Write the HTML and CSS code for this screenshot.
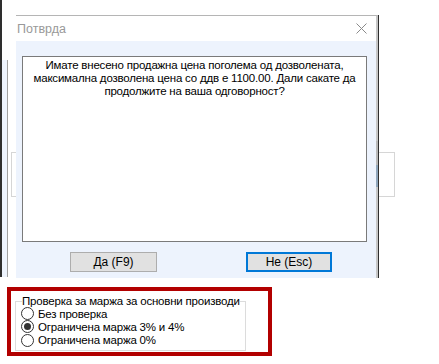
FILE: index.html
```html
<!DOCTYPE html>
<html lang="mk">
<head>
    <meta charset="UTF-8">
    <title>Потврда</title>
    <link rel="stylesheet" href="styles.css">
</head>
<body>
    <div class="backdrop">
        <div class="edge"></div>
        <div class="strip"></div>
        <div class="main">
            <div class="field"></div>
        </div>
    </div>

    <div class="margin-panel">
        <fieldset class="group">
            <legend>Проверка за маржа за основни производи</legend>
            <label class="radio"><input type="radio" name="marza"> Без проверка</label>
            <label class="radio"><input type="radio" name="marza" checked> Ограничена маржа 3% и 4%</label>
            <label class="radio"><input type="radio" name="marza"> Ограничена маржа 0%</label>
        </fieldset>
    </div>

    <!-- модален прозорец над формата -->
    <div class="dialog">
        <div class="titlebar">
            <span class="title">Потврда</span>
            <svg class="close" width="11" height="11" viewBox="0 0 11 11">
                <path d="M0.5 0.5 L10.5 10.5 M10.5 0.5 L0.5 10.5" stroke="#8a8a8a" stroke-width="1" fill="none"/>
            </svg>
        </div>
        <div class="dialog-body">
            <div class="message">
                Имате внесено продажна цена поголема од дозволената,<br>
                максимална дозволена цена со ддв е 1100.00. Дали сакате да<br>
                продолжите на ваша одговорност?
            </div>
            <div class="buttons">
                <button class="btn btn-yes">Да (F9)</button>
                <button class="btn btn-no">Не (Esc)</button>
            </div>
        </div>
        <div class="scroll"></div>
    </div>
</body>
</html>
```

FILE: styles.css
```css
body {
    margin: 0;
    background-color: white;
    font-family: "Liberation Sans", Arial, sans-serif;
    font-size: 11.5px;
    letter-spacing: -0.2px;
    color: #000;
}

.backdrop {
    display: flex;
    height: 277px;
}

.edge {
    width: 2px;
    background-color: #2e2e2e;
}

.strip {
    width: 5px;
    margin-top: 60px;
    background-color: #edf3fd;
    border-right: 1px solid #a0a0a0;
}

.main {
    flex: 1;
    padding-top: 152px;
}

.field {
    margin-left: 3px;
    width: 384px;
    height: 45px;
    border: 1px solid #d6d6d6;
    box-sizing: border-box;
}

.margin-panel {
    margin: 10px 0 0 7px;
    width: 265px;
    height: 69px;
    border: 4px solid #b20000;
    box-sizing: border-box;
    padding: 4px 0 0 4px;
}

.group {
    margin: 0;
    width: 231px;
    height: 56px;
    box-sizing: border-box;
    border: 1px solid #dcdcdc;
    padding: 0 0 0 5px;
    min-width: 0;
}

.group legend {
    padding: 0;
    margin-left: 1px;
    line-height: 12px;
    white-space: nowrap;
}

.radio {
    display: flex;
    align-items: center;
    gap: 4px;
    height: 13.3px;
    white-space: nowrap;
}

.radio input {
    appearance: none;
    margin: 0;
    width: 13px;
    height: 13px;
    border: 1px solid #333;
    border-radius: 50%;
    box-sizing: border-box;
    background-color: white;
    display: flex;
    align-items: center;
    justify-content: center;
}

.radio input:checked::after {
    content: "";
    width: 7px;
    height: 7px;
    border-radius: 50%;
    background-color: #333;
}

.dialog {
    position: absolute;
    left: 16px;
    top: 15px;
    width: 360px;
    height: 262px;
    border-top: 1px solid #b5b5b5;
    border-right: 2px solid #c6c6c6;
    box-shadow: 1px 0 0 #2e2e2e;
    display: flex;
    flex-direction: column;
}

.titlebar {
    height: 25px;
    background-color: white;
    display: flex;
    align-items: center;
    justify-content: space-between;
    padding: 0 9px 0 1px;
}

.title {
    color: #999999;
    font-size: 12.5px;
    letter-spacing: 0;
}

.dialog-body {
    flex: 1;
    background-color: #edf3fd;
    padding: 15px 9px 0 6px;
}

.message {
    height: 186px;
    box-sizing: border-box;
    background-color: white;
    border: 1px solid #7a7a7a;
    text-align: center;
    padding-top: 2px;
    line-height: 13px;
}

.buttons {
    display: flex;
    margin-top: 10px;
    padding-left: 48px;
    gap: 89px;
}

.btn {
    height: 20px;
    background-color: #e1e1e1;
    border: 1px solid #adadad;
    font-family: "Liberation Sans", Arial, sans-serif;
    font-size: 12px;
    padding: 0;
    color: #000;
}

.btn-yes {
    width: 87px;
}

.btn-no {
    width: 86px;
    border: 2px solid #0078d7;
}

.scroll {
    position: absolute;
    right: -2px;
    top: 125px;
    width: 2px;
    height: 24px;
    background-color: #b8b8b8;
    border-bottom: 22px solid #8fa6bc;
}
```
